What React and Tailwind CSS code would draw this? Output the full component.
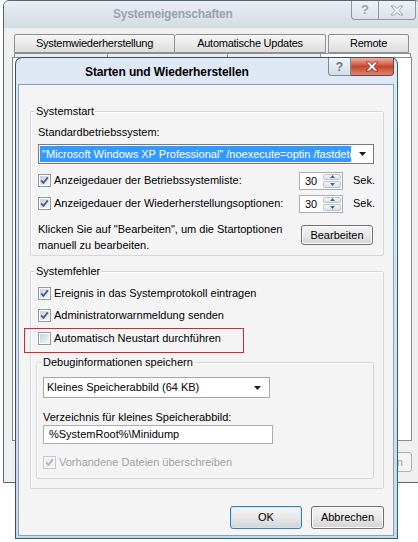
import React from "react";

function Check({ checked = true, disabled = false }) {
  return (
    <svg width="13" height="13" viewBox="0 0 13 13" className="shrink-0">
      <defs>
        <linearGradient id="cbg" x1="0" y1="0" x2="1" y2="1">
          <stop offset="0" stopColor="#c9d0db" />
          <stop offset="1" stopColor="#f4f6f9" />
        </linearGradient>
      </defs>
      <rect x="0.5" y="0.5" width="12" height="12" fill="#fdfdfd" stroke={disabled ? "#c4c6c9" : "#979899"} />
      <rect x="2" y="2" width="9" height="9" fill={disabled ? "#eef0f3" : "url(#cbg)"} />
      {checked && (
        <path d="M3.2 6.4 L5.4 9 L9.8 3.4" fill="none" stroke={disabled ? "#a9b4c6" : "#46598c"} strokeWidth="1.8" strokeLinejoin="round" />
      )}
    </svg>
  );
}

function Arrow() {
  return (
    <svg width="7" height="4" viewBox="0 0 7 4">
      <path d="M0 0 H7 L3.5 4 Z" fill="#1a1a2e" />
    </svg>
  );
}

function Spin() {
  return (
    <div className="flex h-[18px] w-[44px] border border-[#abadb3] bg-white">
      <div className="flex-1 pl-[5px] leading-[16px]">30</div>
      <div className="my-[1px] mr-[1px] flex w-[18px] flex-col gap-[1px]">
        <div className="flex flex-1 items-center justify-center rounded-[2px] border border-[#b8c2ce] bg-gradient-to-b from-[#f6f8fa] to-[#d9e1ea]">
          <svg width="5" height="3" viewBox="0 0 5 3"><path d="M0 3 L2.5 0 L5 3 Z" fill="#55627a" /></svg>
        </div>
        <div className="flex flex-1 items-center justify-center rounded-[2px] border border-[#b8c2ce] bg-gradient-to-b from-[#f6f8fa] to-[#d9e1ea]">
          <svg width="5" height="3" viewBox="0 0 5 3"><path d="M0 0 L2.5 3 L5 0 Z" fill="#55627a" /></svg>
        </div>
      </div>
    </div>
  );
}

function Btn({ children, w, def = false }) {
  return (
    <div
      className={
        "flex items-center justify-center rounded-[3px] border bg-gradient-to-b from-[#f4f4f4] via-[#e8e8e8] to-[#d3d3d3] " +
        (def ? "border-[#3c7fb1] shadow-[inset_0_0_0_1px_#c9e6f7]" : "border-[#707070] shadow-[inset_0_0_0_1px_#fbfbfb]")
      }
      style={{ width: w }}
    >
      {children}
    </div>
  );
}

function Group({ label, className, labelLeft = "5px", children }) {
  return (
    <div className={"relative rounded-[2px] border border-[#d3d8dd] shadow-[inset_1px_1px_0_#ffffff] " + className}>
      <span className="absolute top-[-7px] bg-[#f4f4f4] px-[1px] leading-[13px]" style={{ left: labelLeft }}>
        {label}
      </span>
      {children}
    </div>
  );
}

export default function App() {
  return (
    <div className="relative h-[542px] w-[418px] overflow-hidden bg-white font-['Liberation_Sans',Arial,sans-serif] text-[11px] text-black">
      {/* Background window: Systemeigenschaften */}
      <div className="absolute left-[3px] top-0 flex h-[483px] w-[418px] flex-col rounded-t-[6px] border border-[#5b6670] bg-[#efefef]">
        <div className="flex h-[27px] items-start rounded-t-[5px] bg-gradient-to-b from-[#e9eef3] to-[#d3dbe4]">
          <div className="pl-[109px] pt-[4px] text-[12px] font-bold tracking-[-0.2px] text-[#98a3ae]">Systemeigenschaften</div>
          <div className="flex-1" />
          <div className="mr-[4px] flex h-[19px]">
            <div className="flex w-[28px] items-center justify-center rounded-bl-[4px] border border-t-0 border-[#8d98a3] bg-gradient-to-b from-[#eef2f6] to-[#dbe2ea] text-[13px] font-bold text-[#9aa4ae]">?</div>
            <div className="flex w-[37px] items-center justify-center rounded-br-[4px] border border-l-0 border-t-0 border-[#8d98a3] bg-gradient-to-b from-[#eef2f6] to-[#dbe2ea]">
              <svg width="14" height="11" viewBox="0 0 14 11">
                <path d="M1 1 H4.5 L7 3.8 L9.5 1 H13 L9 5.5 L13 10 H9.5 L7 7.2 L4.5 10 H1 L5 5.5 Z" fill="#f7f9fb" stroke="#9aa4ae" strokeWidth="1" />
              </svg>
            </div>
          </div>
        </div>
        <div className="flex flex-1 flex-col px-[8px] pt-[6px]">
          <div className="ml-[2px] flex h-[19px] tracking-[-0.25px]">
            <div className="flex w-[161px] items-center justify-center rounded-t-[2px] border border-[#8e8f8f] bg-gradient-to-b from-[#f6f6f6] to-[#dedede]">Systemwiederherstellung</div>
            <div className="flex w-[151px] items-center justify-center rounded-t-[2px] border border-l-0 border-[#8e8f8f] bg-gradient-to-b from-[#f6f6f6] to-[#dedede]">Automatische Updates</div>
            <div className="ml-[2px] flex w-[81px] items-center justify-center rounded-t-[2px] border border-[#8e8f8f] bg-gradient-to-b from-[#f6f6f6] to-[#dedede]">Remote</div>
          </div>
          <div className="ml-[2px] flex h-[4px]">
            <div className="w-[93px] border-l border-t border-[#8e8f8f] bg-[#ececec]" />
            <div className="w-[120px] border-l border-t border-[#8e8f8f] bg-[#ececec]" />
            <div className="w-[93px] border-l border-t border-[#8e8f8f] bg-[#ececec]" />
            <div className="w-[91px] border-x border-t border-[#8e8f8f] bg-white" />
          </div>
          <div className="h-[384px] border border-[#898c95] bg-white" />
          <div className="mt-[11px] flex justify-end">
            <div className="flex h-[20px] w-[82px] items-center justify-center rounded-[3px] border border-[#adb2b5] bg-[#f4f4f4] text-[#a0a0a0]">Übernehmen</div>
          </div>
        </div>
      </div>

      {/* Front dialog: Starten und Wiederherstellen */}
      <div className="absolute left-[15px] top-[57px] flex h-[482px] w-[383px] flex-col rounded-t-[7px] border border-[#33556c] border-b-[#1e6585] border-r-[#1e6585] bg-gradient-to-b from-[#dfe9f5] to-[#c9d9ec]">
        <div className="flex h-[26px] items-start">
          <div className="flex-1 pl-[69px] pt-[5px] text-[12px] font-bold tracking-[-0.1px] text-black">Starten und Wiederherstellen</div>
          <div className="mr-[3px] flex h-[18px]">
            <div className="flex w-[23px] items-center justify-center rounded-bl-[4px] border border-t-0 border-[#7b8a99] bg-gradient-to-b from-[#f1f5f9] to-[#d2dce7] text-[12px] font-bold text-[#68747f]">?</div>
            <div className="flex w-[43px] items-center justify-center rounded-br-[4px] border border-l-0 border-t-0 border-[#8a3a2c] bg-gradient-to-b from-[#eab0a3] via-[#c9452c] to-[#d9836e]">
              <svg width="14" height="11" viewBox="0 0 14 11">
                <path d="M1 1 H4.5 L7 3.8 L9.5 1 H13 L9 5.5 L13 10 H9.5 L7 7.2 L4.5 10 H1 L5 5.5 Z" fill="#ffffff" stroke="#6d2a1e" strokeWidth="0.8" />
              </svg>
            </div>
          </div>
        </div>

        <div className="relative mb-[2px] ml-[2px] mr-[3px] flex flex-1 flex-col border border-[#8ea0b3] bg-[#f4f4f4] pl-[11px] pr-[9px] pt-[26px]">
          {/* Systemstart */}
          <Group label="Systemstart" className="h-[145px] px-[7px] pt-[14px]" labelLeft="4px">
            <div className="leading-[13px]">Standardbetriebssystem:</div>
            <div className="mt-[5px] flex h-[20px] w-[336px] items-center border border-[#7a7a7a] bg-white">
              <div className="ml-[1px] h-[16px] w-[311px] overflow-hidden whitespace-nowrap bg-[#3399ff] pl-[2px] leading-[16px] text-white">
                "Microsoft Windows XP Professional" /noexecute=optin /fastdete
              </div>
              <div className="flex flex-1 justify-center"><Arrow /></div>
            </div>
            <div className="mt-[7px] flex h-[19px] items-center">
              <Check />
              <span className="ml-[3px] w-[245px]">Anzeigedauer der Betriebssystemliste:</span>
              <Spin />
              <span className="ml-[10px]">Sek.</span>
            </div>
            <div className="mt-[4px] flex h-[19px] items-center">
              <Check />
              <span className="ml-[3px] w-[245px]">Anzeigedauer der Wiederherstellungsoptionen:</span>
              <Spin />
              <span className="ml-[10px]">Sek.</span>
            </div>
            <div className="mt-[8px] flex items-start">
              <div className="w-[263px] leading-[16px]">
                Klicken Sie auf "Bearbeiten", um die Startoptionen
                <br />
                manuell zu bearbeiten.
              </div>
              <div className="mt-[4px] flex h-[20px]">
                <Btn w="72px">Bearbeiten</Btn>
              </div>
            </div>
          </Group>

          {/* Systemfehler */}
          <Group label="Systemfehler" className="mt-[15px] h-[218px] pt-[11px]" labelLeft="4px">
            <div className="ml-[7px] flex h-[20px] items-center">
              <Check />
              <span className="ml-[3px]">Ereignis in das Systemprotokoll eintragen</span>
            </div>
            <div className="ml-[7px] mt-[2px] flex h-[20px] items-center">
              <Check />
              <span className="ml-[3px]">Administratorwarnmeldung senden</span>
            </div>
            <div className="ml-[7px] mt-[3px] flex h-[20px] items-center">
              <Check checked={false} />
              <span className="ml-[3px]">Automatisch Neustart durchführen</span>
            </div>

            <Group label="Debuginformationen speichern" className="ml-[5px] mr-[9px] mt-[14px] h-[117px] px-[6px] pt-[14px]" labelLeft="5px">
              <div className="flex h-[21px] w-[227px] items-center border border-[#a7a7a7] bg-white">
                <span className="flex-1 pl-[3px]">Kleines Speicherabbild (64 KB)</span>
                <span className="mr-[8px]"><Arrow /></span>
              </div>
              <div className="mt-[13px] leading-[13px]">Verzeichnis für kleines Speicherabbild:</div>
              <div className="mt-[1px] flex h-[19px] w-[230px] items-center border border-[#abadb3] bg-white pl-[5px]">
                %SystemRoot%\Minidump
              </div>
              <div className="mt-[8px] flex h-[20px] items-center">
                <Check disabled />
                <span className="ml-[3px] text-[#a3a3a3]">Vorhandene Dateien überschreiben</span>
              </div>
            </Group>
          </Group>

          <div className="mt-[17px] flex justify-end gap-[9px]">
            <div className="flex h-[23px]"><Btn w="72px" def>OK</Btn></div>
            <div className="flex h-[23px]"><Btn w="73px">Abbrechen</Btn></div>
          </div>

          {/* red annotation rectangle */}
          <div className="absolute left-[5px] top-[243px] h-[25px] w-[220px] border border-[#d8242a]" />
        </div>
      </div>
    </div>
  );
}
